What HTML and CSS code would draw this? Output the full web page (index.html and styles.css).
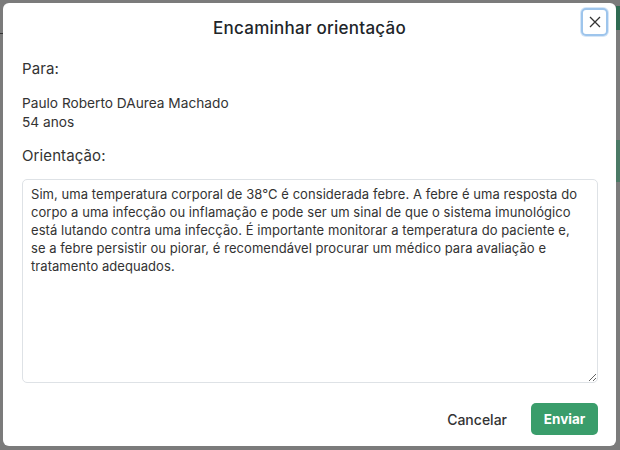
FILE: index.html
```html
<!DOCTYPE html>
<html lang="pt-BR">
<head>
<meta charset="utf-8">
<title>Encaminhar orientação</title>
<link rel="stylesheet" href="styles.css">
</head>
<body>
<div class="backdrop-bits">
  <span class="bit bit-a"></span>
  <span class="bit bit-b"></span>
  <span class="bit bit-c"></span>
</div>
<div class="modal">
  <div class="modal-header">
    <span></span>
    <h1 class="modal-title">Encaminhar orientação</h1>
    <button class="close-btn" type="button" aria-label="Fechar">
      <svg width="12" height="12" viewBox="0 0 12 12"><path d="M1 1 L11 11 M11 1 L1 11" stroke="#333" stroke-width="1.3" fill="none"/></svg>
    </button>
  </div>
  <div class="modal-body">
    <div class="label label-para">Para:</div>
    <div class="patient">
      <div>Paulo Roberto DAurea Machado</div>
      <div>54 anos</div>
    </div>
    <div class="label label-orient">Orientação:</div>
    <textarea class="orient-text">Sim, uma temperatura corporal de 38°C é considerada febre. A febre é uma resposta do corpo a uma infecção ou inflamação e pode ser um sinal de que o sistema imunológico está lutando contra uma infecção. É importante monitorar a temperatura do paciente e, se a febre persistir ou piorar, é recomendável procurar um médico para avaliação e tratamento adequados.</textarea>
  </div>
  <div class="modal-footer">
    <button class="btn-cancel" type="button">Cancelar</button>
    <button class="btn-send" type="button">Enviar</button>
  </div>
</div>
</body>
</html>
```

FILE: styles.css
```css
* { box-sizing: border-box; }
html, body { margin: 0; height: 100%; }
body {
  background: #7b7b7b;
  padding: 3px 4px 4px 3px;
  font-family: Inter, "Open Sans", sans-serif;
  color: #212529;
  position: relative;
  overflow: hidden;
}
.backdrop-bits .bit { position: absolute; display: block; }
.bit-a { left: 616px; top: 6px; width: 4px; height: 24px; background: #2f6b52; }
.bit-b { left: 616px; top: 140px; width: 4px; height: 42px; background: #4c7a66; }
.bit-c { left: 0; top: 33px; width: 3px; height: 1px; background: #333; }
.modal {
  position: relative;
  height: 443px;
  background: #fff;
  border-radius: 6px;
  display: flex;
  flex-direction: column;
}
.modal-header {
  display: grid;
  grid-template-columns: 1fr auto 1fr;
  align-items: start;
  height: 50px;
  padding: 5px 8px 0 8px;
}
.modal-title {
  margin: 0;
  padding-top: 10px;
  font-size: 17px;
  font-weight: 500;
  color: #212529;
  letter-spacing: 0.25px;
}
.close-btn {
  justify-self: end;
  width: 27px;
  height: 28px;
  padding: 0;
  border: 2px solid #9ec5ec;
  border-radius: 5px;
  background: #fff;
  display: flex;
  align-items: center;
  justify-content: center;
  box-shadow: 0 0 0 1px #d6e6f7;
}
.modal-body {
  padding: 0 18px 0 19px;
  display: flex;
  flex-direction: column;
}
.label {
  font-size: 15px;
  color: #333;
  letter-spacing: 0.1px;
}
.label-para { margin-top: 6px; }
.patient {
  margin-top: 16px;
  font-size: 13.7px;
  line-height: 19px;
  color: #333;
}
.label-orient { margin-top: 14px; }
.orient-text {
  margin-top: 14px;
  height: 204px;
  resize: vertical;
  border: 1px solid #dee2e6;
  border-radius: 5px;
  padding: 5px 14px 5px 8px;
  font-family: Inter, "Open Sans", sans-serif;
  font-size: 13px;
  letter-spacing: 0.06px;
  line-height: 18px;
  color: #333;
  outline: none;
}
.modal-footer {
  margin-top: auto;
  display: flex;
  justify-content: flex-end;
  align-items: flex-end;
  gap: 12px;
  padding: 0 18px 11px 0;
}
.btn-cancel {
  border: 0;
  background: transparent;
  font-family: Inter, "Open Sans", sans-serif;
  font-size: 14px;
  font-weight: 500;
  color: #333;
  padding: 8px 12px;
  height: 32px;
}
.btn-send {
  border: 0;
  background: #3a9d6b;
  color: #fff;
  font-family: Inter, "Open Sans", sans-serif;
  font-size: 13.5px;
  font-weight: 700;
  border-radius: 5px;
  width: 67px;
  height: 32px;
}
```
